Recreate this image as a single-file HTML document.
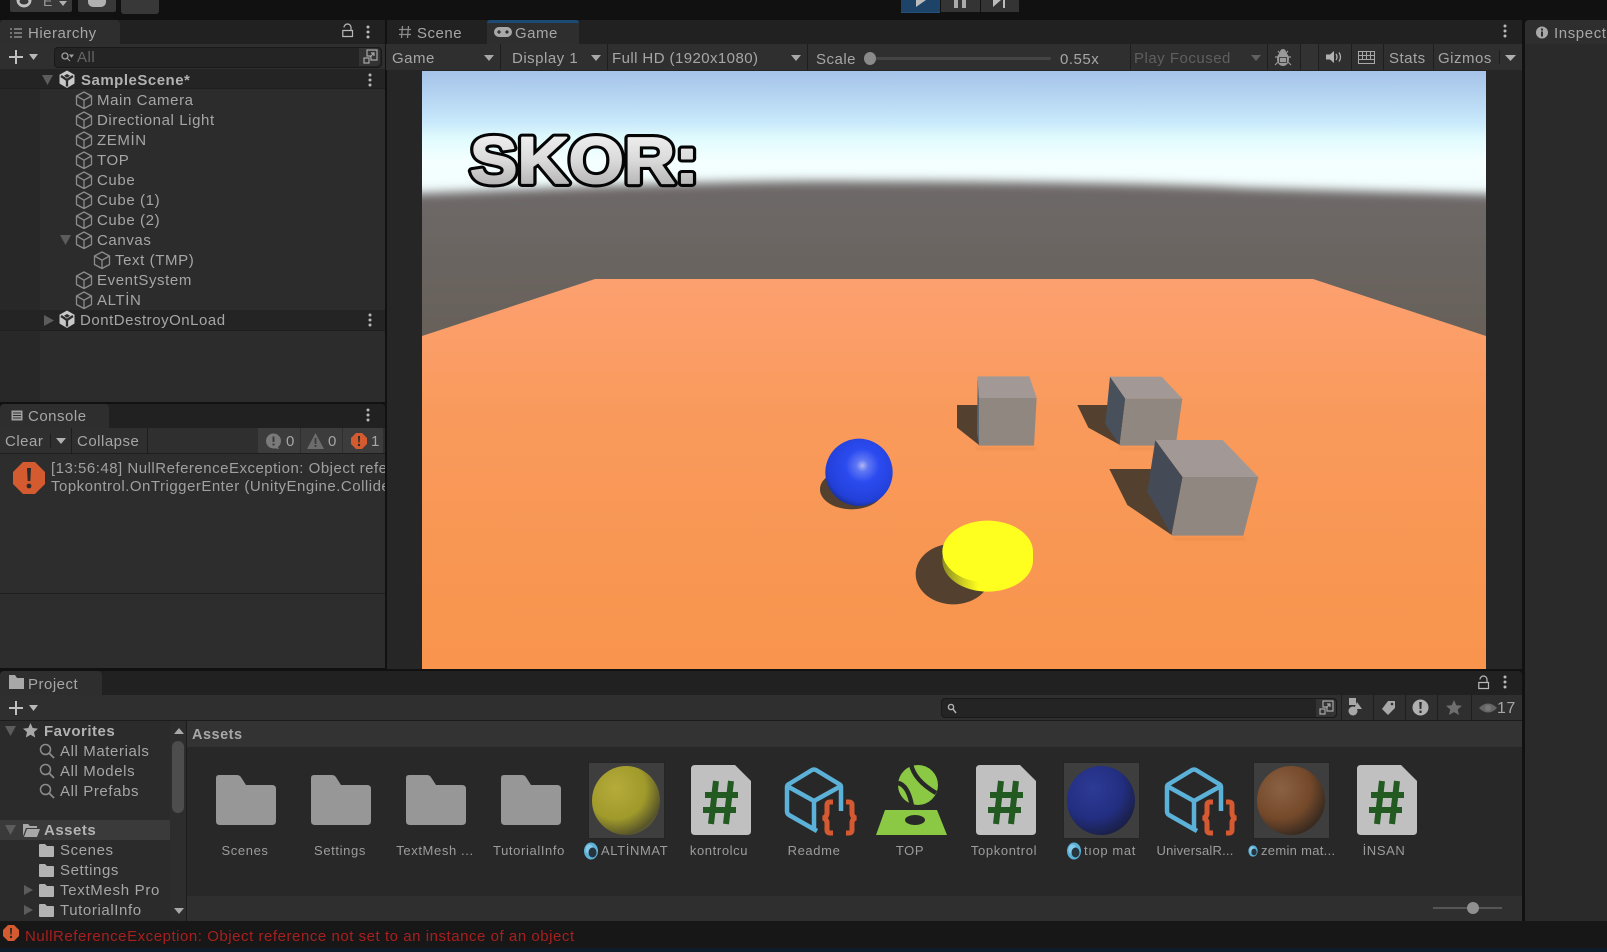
<!DOCTYPE html>
<html><head><meta charset="utf-8"><title>Unity</title>
<style>
html,body{margin:0;padding:0;background:#111}
#r{position:relative;width:1607px;height:952px;overflow:hidden;background:#111;font-family:"Liberation Sans",sans-serif}
#r div{position:absolute}
.b{position:absolute}
.t{position:absolute;white-space:nowrap;line-height:20px;height:20px;font-size:15px;letter-spacing:.5px;color:#a6a6a6;margin-top:1px}
.w{letter-spacing:.6px}
.s{font-size:13px;letter-spacing:.62px;color:#9c9c9c;margin-top:0}
.c{transform:translateX(-50%)}
.bd{font-weight:bold;color:#b2b2b2}
svg{position:absolute;overflow:visible}
.sep{width:1px;background:#1e1e1e}
</style></head><body><div id="r">
<svg width="0" height="0" style="position:absolute"><defs>
<symbol id="cube" viewBox="0 0 18 18" overflow="visible"><path d="M9 1 16.500 5v8.500L9 17.500 1.500 13.500V5zM1.500 5 9 9.200 16.500 5M9 9.200V17.500" fill="none" stroke="#8c8c8c" stroke-width="1.300" stroke-linejoin="round"/></symbol>
<symbol id="unity" viewBox="0 0 18 18" overflow="visible"><path d="M9 0 16.500 4.200V13L9 17.500 1.500 13V4.200z" fill="#c8c8c8"/><path d="M9 9.500V16M9 9.500 3 5.500M9 9.500 15 5.500" stroke="#2a2a2a" stroke-width="2.300"/><path d="M6 5.200 9 3.500 12 5.200 9 7.200z" fill="#2a2a2a"/></symbol>
<symbol id="dots" viewBox="0 0 4 14" overflow="visible"><circle cx="2" cy="2" r="1.500" fill="#b8b8b8"/><circle cx="2" cy="7" r="1.500" fill="#b8b8b8"/><circle cx="2" cy="12" r="1.500" fill="#b8b8b8"/></symbol>
<symbol id="lock" viewBox="0 0 12 12" overflow="visible"><path d="M2 2.500a2.600 2.600 0 0 1 7 0V5M.8 5.500H10.500V11.500H.8z" fill="none" stroke="#b8b8b8" stroke-width="1.200"/></symbol>
<symbol id="folder" viewBox="0 0 60 50" overflow="visible"><path d="M3 0H21Q24 0 25.500 3L30 10H56Q60 10 60 14V46Q60 50 56 50H4Q0 50 0 46V3Q0 0 3 0z" fill="#979797"/></symbol>
<symbol id="fsm" viewBox="0 0 15 13" overflow="visible"><path d="M1 0H6L8 2H14Q15 2 15 3V12Q15 13 14 13H1Q0 13 0 12V1Q0 0 1 0z" fill="#b2b2b2"/></symbol>
<symbol id="script" viewBox="0 0 60 70" overflow="visible"><path d="M4 0H44L60 16V66Q60 70 56 70H4Q0 70 0 66V4Q0 0 4 0z" fill="#c0c0c0"/><path d="M25 16 20 59M40 16 35 59M14 30H47M12 45H45" stroke="#225a22" stroke-width="6" fill="none"/></symbol>
<symbol id="pkg" viewBox="0 0 70 68" overflow="visible"><path d="M31 64 3 48Q1 47 1 44V20Q1 18 3 17L26 3Q28 2 30 3L53 17Q55 18 55 20V44M1 19 28 34 55 19M28 34V62" fill="none" stroke="#5bb1d8" stroke-width="4.500" stroke-linejoin="round"/><path d="M47 35h-3q-3 0-3 3v8q0 4-4 5 4 1 4 5v7q0 3 3 3h3M60 35h3q3 0 3 3v8q0 4 4 5-4 1-4 5v7q0 3-3 3h-3" fill="none" stroke="#d65a31" stroke-width="5"/></symbol>
<symbol id="err" viewBox="0 0 32 32" overflow="visible"><path d="M10 0H22L32 10V22L22 32H10L0 22V10z" fill="#d45a30"/><path d="M14 6H18L17.300 19H14.700z" fill="#2a2a2a"/><circle cx="16" cy="24" r="2.400" fill="#2a2a2a"/></symbol>
<symbol id="mat" viewBox="0 0 14 18" overflow="visible"><ellipse cx="7" cy="9" rx="7" ry="8.500" fill="#5bb1d8"/><ellipse cx="5.500" cy="7.500" rx="4" ry="5" fill="#86c8e8"/><ellipse cx="8.500" cy="10.500" rx="4" ry="5" fill="#27333d"/></symbol>
<radialGradient id="gy" cx=".35" cy=".33" r=".8"><stop offset="0" stop-color="#b5ab3a"/><stop offset=".55" stop-color="#a09a2b"/><stop offset=".86" stop-color="#57542a"/><stop offset="1" stop-color="#66644a"/></radialGradient>
<radialGradient id="gb" cx=".38" cy=".33" r=".8"><stop offset="0" stop-color="#2e3b96"/><stop offset=".55" stop-color="#222e80"/><stop offset=".88" stop-color="#1a1f45"/><stop offset="1" stop-color="#44455a"/></radialGradient>
<radialGradient id="gz" cx=".35" cy=".33" r=".8"><stop offset="0" stop-color="#8a6243"/><stop offset=".55" stop-color="#74492a"/><stop offset=".88" stop-color="#382a20"/><stop offset="1" stop-color="#55504c"/></radialGradient>
<radialGradient id="gs" cx=".55" cy=".4" r=".62"><stop offset="0" stop-color="#b3b7f5"/><stop offset=".14" stop-color="#5f77f3"/><stop offset=".4" stop-color="#2c4bf0"/><stop offset=".85" stop-color="#2240d8"/><stop offset="1" stop-color="#1a2f9c"/></radialGradient>
<linearGradient id="ge" x1="0" y1="0" x2="0" y2="1"><stop offset="0" stop-color="#fca070"/><stop offset=".35" stop-color="#f99a5c"/><stop offset="1" stop-color="#f8944c"/></linearGradient>
<linearGradient id="gt" x1="0" y1="0" x2="0" y2="1"><stop offset="0" stop-color="#f8f8f8"/><stop offset=".5" stop-color="#dadada"/><stop offset="1" stop-color="#a4a4a4"/></linearGradient>
<linearGradient id="gc" x1="0" y1="0" x2="1" y2="0"><stop offset="0" stop-color="#8d8d20"/><stop offset=".4" stop-color="#ffff1f"/></linearGradient>
<filter id="bl" x="-5%" y="-20%" width="110%" height="140%"><feGaussianBlur stdDeviation="5"/></filter>
<filter id="sft" x="-20%" y="-20%" width="140%" height="140%"><feGaussianBlur stdDeviation="3"/></filter>
</defs></svg>

<!-- top toolbar -->
<div style="left:10px;top:0;width:62px;height:12px;background:#383838;border-radius:0 0 2px 2px"></div>
<svg style="left:16px;top:0" width="16" height="12"><circle cx="8" cy="0" r="7.500" fill="#c0c0c0"/><ellipse cx="8" cy="1.500" rx="4.500" ry="3" fill="#383838"/></svg>
<div class="t" style="left:43px;top:-10px;font-size:14px;color:#999">E</div>
<svg style="left:59px;top:1px" width="8" height="5"><path d="M0 0H8L4 5z" fill="#b0b0b0"/></svg>
<div style="left:78px;top:0;width:38px;height:12px;background:#383838;border-radius:0 0 2px 2px"></div>
<div style="left:88px;top:0;width:18px;height:7px;background:#b0b0b0;border-radius:0 0 5px 5px"></div>
<div style="left:121px;top:0;width:38px;height:14px;background:#383838;border-radius:0 0 3px 3px"></div>
<div style="left:901px;top:0;width:39px;height:12px;background:#1d4369;border-bottom:1px solid #26507c"></div>
<svg style="left:914px;top:0" width="12" height="8"><path d="M2 0H12L2 7z" fill="#bcbcbc"/></svg>
<div style="left:941px;top:0;width:39px;height:12px;background:#343434"></div>
<div style="left:954px;top:0;width:4px;height:8px;background:#aaa"></div><div style="left:962px;top:0;width:4px;height:8px;background:#aaa"></div>
<div style="left:981px;top:0;width:38px;height:12px;background:#343434"></div>
<svg style="left:993px;top:0" width="14" height="8"><path d="M0 0H8L0 7z M10 0H12V8H10z" fill="#bcbcbc"/></svg>

<!-- hierarchy panel -->
<div style="left:0;top:20px;width:385px;height:382px;background:#282828;border-radius:4px 4px 0 0">
<div style="left:0;top:0;width:385px;height:24px;background:#212121"></div>
<div style="left:0;top:0;width:120px;height:24px;background:#2e2e2e;border-radius:4px 4px 0 0"></div>
<div style="left:0;top:24px;width:385px;height:25px;background:#2f2f2f"></div>
<div style="left:40px;top:69px;width:345px;height:313px;background:#2c2c2c"></div>
<div style="left:0;top:49px;width:385px;height:20px;background:#242424"></div>
<div style="left:0;top:68px;width:385px;height:1px;background:#1f1f1f"></div>
<div style="left:0;top:290px;width:385px;height:20px;background:#242424"></div>
<div style="left:0;top:310px;width:385px;height:1px;background:#1f1f1f"></div>
</div>
<svg style="left:9px;top:27px" width="14" height="12"><path d="M1 2h2M1 6h2M1 10h2M5 2h8M5 6h8M5 10h8" stroke="#a0a0a0" stroke-width="1.300"/></svg>
<div class="t" style="left:28px;top:23px">Hierarchy</div>
<svg style="left:342px;top:25px" width="12" height="12"><use href="#lock"/></svg>
<svg style="left:366px;top:25px" width="4" height="14"><use href="#dots"/></svg>
<svg style="left:8px;top:49px" width="16" height="16"><path d="M8 1V15M1 8H15" stroke="#c0c0c0" stroke-width="2"/></svg>
<svg style="left:29px;top:54px" width="9" height="6"><path d="M0 0H9L4.500 6z" fill="#b8b8b8"/></svg>
<div style="left:54px;top:47px;width:326px;height:19px;background:#242424;border:1px solid #191919;border-radius:4px"></div>
<svg style="left:60px;top:51px" width="14" height="12"><circle cx="5" cy="5" r="3" fill="none" stroke="#a0a0a0" stroke-width="1.300"/><path d="M7 7 10 10M10 4H13L11.500 6z" stroke="#a0a0a0" fill="#a0a0a0"/></svg>
<div class="t" style="left:77px;top:47px;color:#666">All</div>
<div style="left:359px;top:48px;width:21px;height:18px;background:#333;border-radius:0 4px 4px 0"></div>
<svg style="left:363px;top:49px" width="15" height="15"><path d="M4 1H14V11H8V7H4z M1 9H6V14H1z M7 8 11 4M8 4H11V7" fill="none" stroke="#a8a8a8" stroke-width="1.200"/></svg>

<svg style="left:42px;top:75px" width="12" height="10"><path d="M0 0H11L5.500 10z" fill="#5c5c5c"/></svg>
<svg style="left:58px;top:70px" width="18" height="19"><use href="#unity"/></svg>
<div class="t bd" style="left:81px;top:70px">SampleScene*</div>
<svg style="left:368px;top:73px" width="4" height="14"><use href="#dots"/></svg>
<svg style="left:75px;top:91px" width="18" height="18"><use href="#cube"/></svg><div class="t w" style="left:97px;top:90px">Main Camera</div>
<svg style="left:75px;top:111px" width="18" height="18"><use href="#cube"/></svg><div class="t w" style="left:97px;top:110px">Directional Light</div>
<svg style="left:75px;top:131px" width="18" height="18"><use href="#cube"/></svg><div class="t w" style="left:97px;top:130px">ZEMİN</div>
<svg style="left:75px;top:151px" width="18" height="18"><use href="#cube"/></svg><div class="t w" style="left:97px;top:150px">TOP</div>
<svg style="left:75px;top:171px" width="18" height="18"><use href="#cube"/></svg><div class="t w" style="left:97px;top:170px">Cube</div>
<svg style="left:75px;top:191px" width="18" height="18"><use href="#cube"/></svg><div class="t w" style="left:97px;top:190px">Cube (1)</div>
<svg style="left:75px;top:211px" width="18" height="18"><use href="#cube"/></svg><div class="t w" style="left:97px;top:210px">Cube (2)</div>
<svg style="left:60px;top:235px" width="11" height="10"><path d="M0 0H11L5.500 10z" fill="#5c5c5c"/></svg>
<svg style="left:75px;top:231px" width="18" height="18"><use href="#cube"/></svg><div class="t w" style="left:97px;top:230px">Canvas</div>
<svg style="left:93px;top:251px" width="18" height="18"><use href="#cube"/></svg><div class="t w" style="left:115px;top:250px">Text (TMP)</div>
<svg style="left:75px;top:271px" width="18" height="18"><use href="#cube"/></svg><div class="t w" style="left:97px;top:270px">EventSystem</div>
<svg style="left:75px;top:291px" width="18" height="18"><use href="#cube"/></svg><div class="t w" style="left:97px;top:290px">ALTİN</div>
<svg style="left:44px;top:315px" width="10" height="11"><path d="M0 0 10 5.500 0 11z" fill="#5c5c5c"/></svg>
<svg style="left:58px;top:310px" width="18" height="19"><use href="#unity"/></svg>
<div class="t w" style="left:80px;top:310px;letter-spacing:.52px">DontDestroyOnLoad</div>
<svg style="left:368px;top:313px" width="4" height="14"><use href="#dots"/></svg>

<!-- console panel -->
<div style="left:0;top:404px;width:385px;height:264px;background:#2d2d2d;border-radius:4px 4px 0 0;overflow:hidden">
<div style="left:0;top:0;width:385px;height:24px;background:#212121"></div>
<div style="left:0;top:0;width:109px;height:24px;background:#2e2e2e;border-radius:4px 4px 0 0"></div>
<div style="left:0;top:24px;width:385px;height:25px;background:#2f2f2f;border-bottom:1px solid #1e1e1e"></div>
<div style="left:71px;top:24px;width:1px;height:25px;background:#1e1e1e"></div>
<div style="left:147px;top:24px;width:1px;height:25px;background:#1e1e1e"></div>
<div style="left:50px;top:30px;width:1px;height:14px;background:#1e1e1e"></div>
<div style="left:258px;top:24px;width:42px;height:25px;background:#3c3c3c"></div>
<div style="left:301px;top:24px;width:41px;height:25px;background:#3c3c3c"></div>
<div style="left:343px;top:24px;width:40px;height:25px;background:#3c3c3c"></div>
<div style="left:0;top:189px;width:385px;height:1px;background:#1f1f1f"></div>
<div class="t" style="left:51px;top:54px;color:#a0a0a0;letter-spacing:.5px">[13:56:48] NullReferenceException: Object reference not set to an instance</div>
<div class="t" style="left:51px;top:72px;color:#a0a0a0;letter-spacing:.5px">Topkontrol.OnTriggerEnter (UnityEngine.Collider other)</div>
</div>
<svg style="left:10px;top:409px" width="14" height="13"><path d="M1 1H13V12H1zM3 4H11M3 6.500H11M3 9H11" fill="#a0a0a0" stroke="#2e2e2e" stroke-width="1"/></svg>
<div class="t" style="left:28px;top:406px">Console</div>
<svg style="left:366px;top:408px" width="4" height="14"><use href="#dots"/></svg>
<div class="t" style="left:5px;top:431px">Clear</div>
<svg style="left:56px;top:438px" width="10" height="6"><path d="M0 0H10L5 6z" fill="#b0b0b0"/></svg>
<div class="t" style="left:77px;top:431px">Collapse</div>
<svg style="left:265px;top:433px" width="17" height="17"><circle cx="8.500" cy="8" r="7.500" fill="#7a7a7a"/><path d="M8 15 14 16 12 12z" fill="#7a7a7a"/><path d="M7.500 3.500H9.500V9H7.500zM7.500 10.500H9.500V12.500H7.500z" fill="#3c3c3c"/></svg>
<div class="t" style="left:286px;top:431px">0</div>
<svg style="left:307px;top:433px" width="17" height="16"><path d="M8.500 0 17 16H0z" fill="#6c6c6c"/><path d="M7.600 5H9.400V11H7.600zM7.600 12H9.400V14H7.600z" fill="#3c3c3c"/></svg>
<div class="t" style="left:328px;top:431px">0</div>
<svg style="left:351px;top:433px" width="16" height="16"><use href="#err"/></svg>
<div class="t" style="left:371px;top:431px">1</div>
<svg style="left:13px;top:462px" width="32" height="32"><use href="#err"/></svg>

<!-- game panel -->
<div style="left:387px;top:20px;width:1135px;height:649px;background:#262626;border-radius:4px 4px 0 0">
<div style="left:0;top:0;width:1135px;height:24px;background:#212121"></div>
<div style="left:100px;top:0;width:92px;height:24px;background:#2e2e2e;border-top:3px solid #1d4a72;box-sizing:border-box;border-radius:3px 3px 0 0"></div>
<div style="left:-1px;top:24px;width:1136px;height:26px;background:#2f2f2f"></div>
<div style="left:113px;top:24px;width:1px;height:26px;background:#1e1e1e"></div>
<div style="left:220px;top:24px;width:1px;height:26px;background:#1e1e1e"></div>
<div style="left:420px;top:24px;width:1px;height:26px;background:#1e1e1e"></div>
<div style="left:743px;top:24px;width:1px;height:26px;background:#1e1e1e"></div>
<div style="left:880px;top:24px;width:1px;height:26px;background:#1e1e1e"></div>
<div style="left:913px;top:24px;width:1px;height:26px;background:#1e1e1e"></div>
<div style="left:914px;top:24px;width:17px;height:26px;background:#323232"></div>
<div style="left:931px;top:24px;width:1px;height:26px;background:#1e1e1e"></div>
<div style="left:964px;top:24px;width:1px;height:26px;background:#1e1e1e"></div>
<div style="left:996px;top:24px;width:1px;height:26px;background:#1e1e1e"></div>
<div style="left:1046px;top:24px;width:1px;height:26px;background:#1e1e1e"></div>
<div style="left:1112px;top:30px;width:1px;height:14px;background:#1e1e1e"></div>
</div>
<svg style="left:398px;top:25px" width="14" height="14"><path d="M4.500 1 3.500 13M10.500 1 9.500 13M1 4.500H13M1 9.500H13" stroke="#8c8c8c" stroke-width="1.300"/></svg>
<div class="t" style="left:417px;top:23px">Scene</div>
<svg style="left:494px;top:26px" width="18" height="12"><rect x="0" y="1" width="18" height="10" rx="5" fill="#a8a8a8"/><path d="M3 6H7M5 4V8" stroke="#2e2e2e" stroke-width="1.300"/><circle cx="13" cy="6" r="1.600" fill="#2e2e2e"/></svg>
<div class="t" style="left:515px;top:23px">Game</div>
<svg style="left:1503px;top:24px" width="4" height="14"><use href="#dots"/></svg>
<div class="t" style="left:392px;top:48px">Game</div>
<svg style="left:484px;top:55px" width="10" height="6"><path d="M0 0H10L5 6z" fill="#a8a8a8"/></svg>
<div class="t" style="left:512px;top:48px">Display 1</div>
<svg style="left:591px;top:55px" width="10" height="6"><path d="M0 0H10L5 6z" fill="#a8a8a8"/></svg>
<div class="t" style="left:612px;top:48px;letter-spacing:.42px">Full HD (1920x1080)</div>
<svg style="left:791px;top:55px" width="10" height="6"><path d="M0 0H10L5 6z" fill="#a8a8a8"/></svg>
<div class="t" style="left:816px;top:49px">Scale</div>
<div style="left:870px;top:57px;width:181px;height:3px;background:#444;border-radius:2px"></div>
<div style="left:864px;top:52px;width:12px;height:13px;background:#8a8a8a;border-radius:50%"></div>
<div class="t" style="left:1060px;top:49px">0.55x</div>
<div class="t" style="left:1134px;top:48px;color:#5f5f5f">Play Focused</div>
<svg style="left:1251px;top:55px" width="10" height="6"><path d="M0 0H10L5 6z" fill="#606060"/></svg>
<svg style="left:1274px;top:48px" width="18" height="19"><path d="M4 3 6.500 6M14 3 11.500 6M1 9H4M14 9H17M1 17 4 14M17 17 14 14" stroke="#999" stroke-width="1.200"/><ellipse cx="9" cy="11" rx="6" ry="7" fill="#999"/><rect x="5.500" y="9.500" width="7" height="5" fill="none" stroke="#444" stroke-width="1"/><circle cx="9" cy="4" r="3" fill="#999"/></svg>
<svg style="left:1326px;top:50px" width="17" height="14"><path d="M0 4.500H4L8 1V13L4 9.500H0z" fill="#b0b0b0"/><path d="M10 4Q12 7 10 10M13 2.500Q16 7 13 11.500" fill="none" stroke="#b0b0b0" stroke-width="1.300"/></svg>
<svg style="left:1358px;top:51px" width="17" height="13"><path d="M.5.500H16.500V12.500H.5zM.5 4.500H16.500M.5 8.500H16.500M4.500.5V8.500M8.500.5V8.500M12.500.5V8.500" fill="none" stroke="#a8a8a8"/></svg>
<div class="t" style="left:1389px;top:48px">Stats</div>
<div class="t" style="left:1438px;top:48px">Gizmos</div>
<svg style="left:1505px;top:55px" width="11" height="6"><path d="M0 0H11L5.500 6z" fill="#b0b0b0"/></svg>

<!-- game view -->
<svg style="left:422px;top:71px" width="1064" height="598" viewBox="422 71 1064 598">
<defs><linearGradient id="sky" gradientUnits="userSpaceOnUse" x1="0" y1="71" x2="0" y2="215"><stop offset="0" stop-color="#a5c3e8"/><stop offset=".17" stop-color="#b4d4f1"/><stop offset=".35" stop-color="#c8e8fb"/><stop offset=".47" stop-color="#e0fbfd"/><stop offset=".62" stop-color="#f4ffff"/><stop offset="1" stop-color="#f0fcfc"/></linearGradient>
<linearGradient id="gnd" gradientUnits="userSpaceOnUse" x1="0" y1="180" x2="0" y2="340"><stop offset="0" stop-color="#6e6969"/><stop offset="1" stop-color="#676059"/></linearGradient>
<clipPath id="gc1"><rect x="422" y="71" width="1064" height="598"/></clipPath></defs>
<g clip-path="url(#gc1)">
<rect x="422" y="71" width="1064" height="150" fill="url(#sky)"/>
<path d="M400 194 C500 191 650 182 800 181 C1000 181 1150 183 1250 188 C1350 191 1450 193 1510 195 V350 H400z" fill="url(#gnd)" filter="url(#bl)"/>
<rect x="422" y="215" width="1064" height="130" fill="url(#gnd)"/>
<path d="M422 336 595 279H1313L1486 336V669H422z" fill="url(#ge)"/>
<g transform="translate(470 183) scale(1 .93)" font-family="Liberation Sans" font-weight="bold" font-size="71">
<text x="0" y="0" fill="#050505" stroke="#050505" stroke-width="8.500" stroke-linejoin="round">SKOR:</text>
<text x="0" y="0" fill="url(#gt)" stroke="url(#gt)" stroke-width="2" stroke-linejoin="round">SKOR:</text>
</g>
<g transform="translate(780 350) scale(.33333)">
<path d="M590 292H765L770 300H590z M1020 292H1190L1194 300H1020z M1180 562H1396L1400 572H1180z" fill="#e07f3c" opacity=".3" filter="url(#sft)"/>
<path d="M531 165H600L597 285 531 233z" fill="#53402f"/>
<path d="M593 79 597 144V287L591 250z" fill="#5c6570"/>
<path d="M593 79H748L770 144H597z" fill="#a29997"/>
<path d="M597 144H770L762 287H597z" fill="#908780"/>
<path d="M892 165H985L1020 285 925 233z" fill="#53402f"/>
<path d="M990 80 1036 146 1019 285 976 222z" fill="#47505b"/>
<path d="M990 80H1145L1207 146H1036z" fill="#a29997"/>
<path d="M1036 146H1207L1187 287H1019z" fill="#908780"/>
<path d="M988 357H1115L1175 555 1042 465z" fill="#53402f"/>
<path d="M1126 270 1208 381 1175 555 1102 425z" fill="#444b56"/>
<path d="M1126 270H1328L1435 381H1208z" fill="#a29997"/>
<path d="M1208 381H1435L1390 557H1175z" fill="#908780"/>
<ellipse cx="215" cy="418" rx="95" ry="60" fill="#53402f"/>
<circle cx="237" cy="367" r="101" fill="url(#gs)"/>
<ellipse cx="520" cy="672" rx="113" ry="91" fill="#53402f"/>
<ellipse cx="623" cy="631" rx="136" ry="94" fill="url(#gc)"/>
<ellipse cx="623" cy="605" rx="136" ry="93" fill="#ffff1f"/>
<path d="M759 605V632H745V605z" fill="#ffff1f"/>
</g></g></svg>

<!-- inspector -->
<div style="left:1525px;top:20px;width:82px;height:700px;background:#2a2a2a;border-radius:4px 0 0 0"></div>
<div style="left:1525px;top:20px;width:82px;height:24px;background:#2e2e2e;border-radius:4px 0 0 0"></div>
<svg style="left:1536px;top:26px" width="12" height="13"><circle cx="6" cy="6.500" r="6" fill="#a8a8a8"/><path d="M5 2.500H7V4.500H5zM5 5.500H7V10.500H5z" fill="#2e2e2e"/></svg>
<div class="t w" style="left:1554px;top:23px">Inspector</div>
<div style="left:1525px;top:720px;width:82px;height:232px;background:#2a2a2a"></div>

<!-- project panel -->
<div style="left:0;top:671px;width:1522px;height:250px;background:#282828;overflow:hidden;border-radius:4px 4px 0 0">
<div style="left:0;top:0;width:1522px;height:24px;background:#212121"></div>
<div style="left:0;top:0;width:102px;height:24px;background:#2e2e2e;border-radius:4px 4px 0 0"></div>
<div style="left:0;top:24px;width:1522px;height:25px;background:#2f2f2f;border-bottom:1px solid #1c1c1c"></div>
<div style="left:0;top:50px;width:186px;height:200px;background:#2b2b2b"></div>
<div style="left:170px;top:50px;width:16px;height:200px;background:#2d2d2d"></div>
<div style="left:172px;top:70px;width:12px;height:72px;background:#4d4d4d;border-radius:6px"></div>
<div style="left:186px;top:50px;width:1px;height:200px;background:#1c1c1c"></div>
<div style="left:187px;top:50px;width:1335px;height:26px;background:#333"></div>
<div style="left:187px;top:225px;width:1335px;height:25px;background:#2f2f2f"></div>
<div style="left:0;top:149px;width:170px;height:20px;background:#3a3a3a"></div>
<div style="left:941px;top:27px;width:394px;height:18px;background:#242424;border:1px solid #191919;border-radius:4px"></div>
<div style="left:1316px;top:28px;width:20px;height:18px;background:#333;border-radius:0 4px 4px 0"></div>
<div class="sep" style="left:1341px;top:24px;height:25px"></div>
<div class="sep" style="left:1373px;top:24px;height:25px"></div>
<div class="sep" style="left:1405px;top:24px;height:25px"></div>
<div class="sep" style="left:1437px;top:24px;height:25px"></div>
<div class="sep" style="left:1471px;top:24px;height:25px"></div>
</div>
<svg style="left:8px;top:675px" width="16" height="14"><path d="M1 0H7L9 3H16V14H1z" fill="#a8a8a8"/></svg>
<div class="t" style="left:28px;top:674px">Project</div>
<svg style="left:1478px;top:677px" width="12" height="12"><use href="#lock"/></svg>
<svg style="left:1503px;top:675px" width="4" height="14"><use href="#dots"/></svg>
<svg style="left:8px;top:700px" width="16" height="16"><path d="M8 1V15M1 8H15" stroke="#c0c0c0" stroke-width="2"/></svg>
<svg style="left:29px;top:705px" width="9" height="6"><path d="M0 0H9L4.500 6z" fill="#b8b8b8"/></svg>
<svg style="left:947px;top:703px" width="10" height="11"><circle cx="4" cy="4" r="2.600" fill="none" stroke="#b0b0b0" stroke-width="1.400"/><path d="M6 6 9 10" stroke="#b0b0b0" stroke-width="1.500"/></svg>
<svg style="left:1319px;top:700px" width="15" height="15"><path d="M4 1H14V11H8V7H4z M1 9H6V14H1z M7 8 11 4M8 4H11V7" fill="none" stroke="#a8a8a8" stroke-width="1.200"/></svg>
<svg style="left:1347px;top:698px" width="16" height="18"><rect x="2" y="0" width="7" height="7" fill="#a8a8a8"/><path d="M10 4 15 11H7z" fill="#a8a8a8"/><circle cx="6" cy="13" r="4.500" fill="#a8a8a8"/></svg>
<svg style="left:1381px;top:700px" width="15" height="15"><path d="M7 1H14V8L7 15 1 9z" fill="#a8a8a8"/><circle cx="11" cy="4" r="1.300" fill="#2f2f2f"/></svg>
<svg style="left:1412px;top:699px" width="17" height="17"><circle cx="8.500" cy="8.500" r="8" fill="#b0b0b0"/><path d="M7.200 3H9.800L9.400 10H7.600zM7.400 11.500H9.600V14H7.400z" fill="#2f2f2f"/></svg>
<svg style="left:1446px;top:700px" width="16" height="15"><path d="M8 0 10.300 5.200 16 5.800 11.700 9.500 13 15 8 12.100 3 15 4.300 9.500 0 5.800 5.700 5.200z" fill="#6e6e6e"/></svg>
<svg style="left:1479px;top:702px" width="19" height="12"><path d="M0 6Q9-3 18 6 9 15 0 6z" fill="#666"/><circle cx="9" cy="6" r="3" fill="#777"/></svg>
<div class="t" style="left:1497px;top:698px;font-size:16px">17</div>

<!-- project tree -->
<svg style="left:5px;top:726px" width="11" height="10"><path d="M0 0H11L5.500 10z" fill="#5c5c5c"/></svg>
<svg style="left:23px;top:723px" width="15" height="15"><path d="M7.500 0 9.700 5 15 5.600 11 9.100 12.200 14.500 7.500 11.700 2.800 14.500 4 9.100 0 5.600 5.300 5z" fill="#a8a8a8"/></svg>
<div class="t bd" style="left:44px;top:721px">Favorites</div>
<svg style="left:39px;top:743px" width="16" height="17"><circle cx="6.500" cy="6.500" r="5" fill="none" stroke="#8c8c8c" stroke-width="1.500"/><path d="M10 10 15 15" stroke="#8c8c8c" stroke-width="1.800"/></svg>
<div class="t w" style="left:60px;top:741px">All Materials</div>
<svg style="left:39px;top:763px" width="16" height="17"><circle cx="6.500" cy="6.500" r="5" fill="none" stroke="#8c8c8c" stroke-width="1.500"/><path d="M10 10 15 15" stroke="#8c8c8c" stroke-width="1.800"/></svg>
<div class="t w" style="left:60px;top:761px">All Models</div>
<svg style="left:39px;top:783px" width="16" height="17"><circle cx="6.500" cy="6.500" r="5" fill="none" stroke="#8c8c8c" stroke-width="1.500"/><path d="M10 10 15 15" stroke="#8c8c8c" stroke-width="1.800"/></svg>
<div class="t w" style="left:60px;top:781px">All Prefabs</div>
<svg style="left:5px;top:825px" width="11" height="10"><path d="M0 0H11L5.500 10z" fill="#5c5c5c"/></svg>
<svg style="left:22px;top:824px" width="18" height="13"><path d="M1 0H6L8 2H15V4H4L1 12z" fill="#a8a8a8"/><path d="M5 5H18L15 13H2z" fill="#a8a8a8"/></svg>
<div class="t bd" style="left:44px;top:820px">Assets</div>
<svg style="left:39px;top:844px" width="15" height="13"><use href="#fsm"/></svg><div class="t w" style="left:60px;top:840px">Scenes</div>
<svg style="left:39px;top:864px" width="15" height="13"><use href="#fsm"/></svg><div class="t w" style="left:60px;top:860px">Settings</div>
<svg style="left:24px;top:885px" width="9" height="10"><path d="M0 0 9 5 0 10z" fill="#5c5c5c"/></svg>
<svg style="left:39px;top:884px" width="15" height="13"><use href="#fsm"/></svg><div class="t w" style="left:60px;top:880px;letter-spacing:.7px">TextMesh Pro</div>
<svg style="left:24px;top:905px" width="9" height="10"><path d="M0 0 9 5 0 10z" fill="#5c5c5c"/></svg>
<svg style="left:39px;top:904px" width="15" height="13"><use href="#fsm"/></svg><div class="t w" style="left:60px;top:900px">TutorialInfo</div>
<svg style="left:174px;top:728px" width="10" height="6"><path d="M5 0 10 6H0z" fill="#a8a8a8"/></svg>
<svg style="left:174px;top:908px" width="10" height="6"><path d="M0 0H10L5 6z" fill="#a8a8a8"/></svg>

<!-- assets -->
<div class="t bd" style="left:192px;top:724px;font-size:14.500px;color:#a8a8a8">Assets</div>
<svg style="left:216px;top:775px" width="60" height="50"><use href="#folder"/></svg>
<svg style="left:311px;top:775px" width="60" height="50"><use href="#folder"/></svg>
<svg style="left:406px;top:775px" width="60" height="50"><use href="#folder"/></svg>
<svg style="left:501px;top:775px" width="60" height="50"><use href="#folder"/></svg>
<div class="t s c" style="left:245px;top:841px">Scenes</div>
<div class="t s c" style="left:340px;top:841px">Settings</div>
<div class="t s c" style="left:435px;top:841px">TextMesh ...</div>
<div class="t s c" style="left:529px;top:841px">TutorialInfo</div>
<div style="left:589px;top:763px;width:75px;height:75px;background:#3e3e3e;box-shadow:0 0 1px #1b1b1b"></div>
<svg style="left:590px;top:765px" width="74" height="70"><ellipse cx="36" cy="35.500" rx="34" ry="34.500" fill="url(#gy)"/></svg>
<svg style="left:584px;top:842px" width="14" height="18"><use href="#mat"/></svg>
<div class="t s" style="left:601px;top:841px">ALTİNMAT</div>
<svg style="left:691px;top:765px" width="60" height="70"><use href="#script"/></svg>
<div class="t s c" style="left:719px;top:841px">kontrolcu</div>
<svg style="left:786px;top:767px" width="70" height="68"><use href="#pkg"/></svg>
<div class="t s c" style="left:814px;top:841px">Readme</div>
<svg style="left:876px;top:765px" width="71" height="70">
<ellipse cx="42" cy="20" rx="20" ry="20" fill="#8bc944"/>
<path d="M35-1Q38 15 60 28M22 18Q32 20 36 41" fill="none" stroke="#282828" stroke-width="4.500"/>
<path d="M9 45H61L71 70H0z" fill="#8bc944"/><ellipse cx="39" cy="55" rx="10" ry="5" fill="#282828"/></svg>
<div class="t s c" style="left:910px;top:841px">TOP</div>
<svg style="left:976px;top:765px" width="60" height="70"><use href="#script"/></svg>
<div class="t s c" style="left:1004px;top:841px">Topkontrol</div>
<div style="left:1064px;top:763px;width:75px;height:75px;background:#3e3e3e;box-shadow:0 0 1px #1b1b1b"></div>
<svg style="left:1067px;top:765px" width="70" height="70"><ellipse cx="34" cy="35.500" rx="34" ry="34.500" fill="url(#gb)"/></svg>
<svg style="left:1067px;top:842px" width="14" height="18"><use href="#mat"/></svg>
<div class="t s" style="left:1084px;top:841px">tıop mat</div>
<svg style="left:1166px;top:767px" width="70" height="68"><use href="#pkg"/></svg>
<div class="t s c" style="left:1195px;top:841px;letter-spacing:.2px">UniversalR...</div>
<div style="left:1254px;top:763px;width:75px;height:75px;background:#3e3e3e;box-shadow:0 0 1px #1b1b1b"></div>
<svg style="left:1257px;top:765px" width="70" height="70"><ellipse cx="34" cy="35.500" rx="34" ry="34.500" fill="url(#gz)"/></svg>
<svg style="left:1248px;top:845px" width="10" height="12"><use href="#mat"/></svg>
<div class="t s" style="left:1261px;top:841px;letter-spacing:.3px">zemin mat...</div>
<svg style="left:1357px;top:765px" width="60" height="70"><use href="#script"/></svg>
<div class="t s c" style="left:1384px;top:841px">İNSAN</div>
<div style="left:1433px;top:907px;width:69px;height:2px;background:#555"></div>
<div style="left:1467px;top:902px;width:12px;height:12px;background:#909090;border-radius:50%"></div>

<!-- status bar -->
<div style="left:0;top:921px;width:1607px;height:27px;background:#171717"></div>
<div style="left:0;top:948px;width:1607px;height:4px;background:#0d1b2a"></div>
<svg style="left:3px;top:925px" width="16" height="16"><use href="#err"/></svg>
<div class="t" style="left:25px;top:926px;color:#a81f1f;letter-spacing:.54px">NullReferenceException: Object reference not set to an instance of an object</div>
</div></body></html>
